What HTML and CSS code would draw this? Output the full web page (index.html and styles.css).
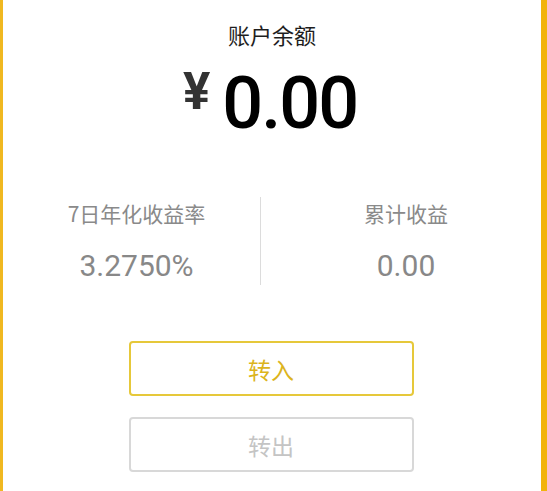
FILE: index.html
```html
<!DOCTYPE html>
<html lang="zh-CN">
<head>
<meta charset="utf-8">
<title>账户余额</title>
<link rel="stylesheet" href="styles.css">
</head>
<body>
<div class="frame">
  <div class="title">账户余额</div>
  <div class="amount">
    <span class="currency">¥</span>
    <span class="value">0.00</span>
  </div>
  <div class="stats">
    <div class="stat stat-left">
      <div class="stat-label">7日年化收益率</div>
      <div class="stat-value">3.2750%</div>
    </div>
    <div class="divider"></div>
    <div class="stat stat-right">
      <div class="stat-label">累计收益</div>
      <div class="stat-value">0.00</div>
    </div>
  </div>
  <div class="actions">
    <button class="btn btn-in">转入</button>
    <button class="btn btn-out">转出</button>
  </div>
</div>
</body>
</html>
```

FILE: styles.css
```css
html, body {
  margin: 0;
  padding: 0;
  background: #ffffff;
}
body {
  font-family: Roboto, "Noto Sans CJK SC", sans-serif;
}
.frame {
  box-sizing: border-box;
  width: 547px;
  height: 491px;
  border-left: 3px solid #f0b820;
  border-right: 6px solid #f2b30c;
  background: #fff;
  overflow: hidden;
}
.title {
  padding-top: 18px;
  text-align: center;
  font-family: "Noto Sans CJK SC", sans-serif;
  font-size: 22px;
  line-height: 32px;
  color: #1e1e1e;
}
.amount {
  display: flex;
  justify-content: center;
  align-items: flex-start;
  margin-top: 14px;
  height: 80px;
  padding-right: 4px;
}
.currency {
  font-family: Roboto, sans-serif;
  font-weight: 700;
  font-size: 51px;
  line-height: 1;
  color: #333;
  margin-top: 2px;
  margin-right: 12px;
}
.value {
  font-family: Roboto, sans-serif;
  font-weight: 500;
  font-size: 72px;
  line-height: 80px;
  letter-spacing: -2px;
  color: #000;
}
.stats {
  display: flex;
  margin-top: 53px;
  height: 88px;
}
.stat {
  text-align: center;
}
.stat-left {
  width: 247px;
  padding-left: 10px;
}
.stat-right {
  flex: 1;
  padding-left: 10px;
}
.divider {
  width: 1px;
  background: #dcdcdc;
}
.stat-label {
  padding-top: 2px;
  font-family: "Noto Sans CJK SC", sans-serif;
  font-size: 21px;
  line-height: 28px;
  color: #8a8a8a;
}
.stat-value {
  margin-top: 21px;
  font-family: Roboto, sans-serif;
  font-size: 30px;
  line-height: 36px;
  color: #888;
}
.actions {
  display: flex;
  flex-direction: column;
  align-items: center;
  gap: 21px;
  margin-top: 56px;
  padding-right: 2px;
}
.btn {
  box-sizing: border-box;
  width: 285px;
  height: 55px;
  border-radius: 4px;
  background: #fff;
  font-family: "Noto Sans CJK SC", sans-serif;
  font-size: 23px;
  padding: 0;
}
.btn-in {
  border: 2px solid #e6c83a;
  color: #dcb41c;
}
.btn-out {
  border: 2px solid #d8d8d8;
  color: #c4c4c4;
}
```
